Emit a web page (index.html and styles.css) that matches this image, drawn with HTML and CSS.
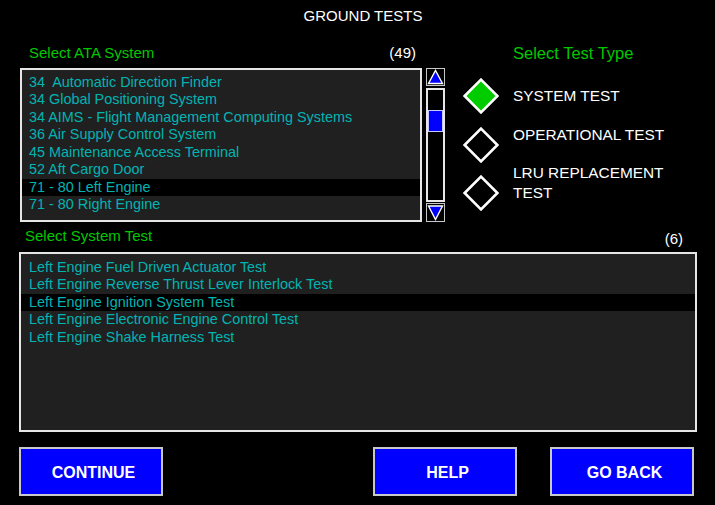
FILE: index.html
```html
<!DOCTYPE html>
<html>
<head>
<meta charset="utf-8">
<link rel="stylesheet" href="styles.css">
</head>
<body>
<div class="screen">
  <h1 class="title">GROUND TESTS</h1>
  <div class="top">
    <section class="ata">
      <div class="label-row ata-label"><span class="label">Select ATA System</span><span class="count">(49)</span></div>
      <div class="list-wrap">
        <ul class="list ata-list">
          <li>34&nbsp; Automatic Direction Finder</li>
          <li>34 Global Positioning System</li>
          <li>34 AIMS - Flight Management Computing Systems</li>
          <li>36 Air Supply Control System</li>
          <li>45 Maintenance Access Terminal</li>
          <li>52 Aft Cargo Door</li>
          <li class="sel">71 - 80 Left Engine</li>
          <li>71 - 80 Right Engine</li>
        </ul>
        <div class="scrollbar">
          <div class="scroll-btn"><svg width="19" height="18" viewBox="0 0 19 18"><rect x="0.5" y="0.5" width="18" height="17" fill="#000" stroke="#c8c8c8"/><polygon points="9.5,2.5 16.5,15.5 2.5,15.5" fill="#0000ff" stroke="#fff" stroke-width="1.4"/></svg></div>
          <div class="track"><div class="thumb"></div></div>
          <div class="scroll-btn down"><svg width="19" height="19" viewBox="0 0 19 19"><rect x="0.5" y="0.5" width="18" height="18" fill="#000" stroke="#c8c8c8"/><polygon points="2.5,3 16.5,3 9.5,16.5" fill="#0000ff" stroke="#fff" stroke-width="1.4"/></svg></div>
        </div>
      </div>
    </section>
    <section class="type">
      <div class="type-label">Select Test Type</div>
      <div class="type-body">
        <div class="diamonds">
          <svg class="diamond" width="36" height="36" viewBox="0 0 36 36"><polygon points="18,1.6 34.4,18 18,34.4 1.6,18" fill="#00cc00" stroke="#fff" stroke-width="2.6"/></svg>
          <svg class="diamond" width="36" height="36" viewBox="0 0 36 36"><polygon points="18,1.6 34.4,18 18,34.4 1.6,18" fill="#000" stroke="#fff" stroke-width="2.6"/></svg>
          <svg class="diamond" width="36" height="36" viewBox="0 0 36 36"><polygon points="18,1.6 34.4,18 18,34.4 1.6,18" fill="#000" stroke="#fff" stroke-width="2.6"/></svg>
        </div>
        <div class="type-labels">
          <div>SYSTEM TEST</div>
          <div>OPERATIONAL TEST</div>
          <div>LRU REPLACEMENT<br>TEST</div>
        </div>
      </div>
    </section>
  </div>
  <section class="sys">
    <div class="label-row sys-label"><span class="label">Select System Test</span><span class="count count-low">(6)</span></div>
    <ul class="list sys-list">
      <li>Left Engine Fuel Driven Actuator Test</li>
      <li>Left Engine Reverse Thrust Lever Interlock Test</li>
      <li class="sel">Left Engine Ignition System Test</li>
      <li>Left Engine Electronic Engine Control Test</li>
      <li>Left Engine Shake Harness Test</li>
    </ul>
  </section>
  <div class="actions">
    <button class="btn">CONTINUE</button>
    <button class="btn help">HELP</button>
    <button class="btn">GO BACK</button>
  </div>
</div>
</body>
</html>
```
FILE: styles.css
```css
* { box-sizing: border-box; }
body {
  margin: 0;
  background: #000;
  font-family: "Liberation Sans", Arial, sans-serif;
}
.screen {
  width: 715px;
  height: 505px;
  overflow: hidden;
}
.title {
  margin: 0;
  height: 32px;
  line-height: 32px;
  padding-left: 11px;
  text-align: center;
  font-size: 15px;
  font-weight: normal;
  color: #fff;
}
.top {
  display: flex;
  padding-left: 20px;
  margin-top: 12px;
}
.ata { width: 425px; }
.label-row {
  display: flex;
  justify-content: space-between;
  align-items: center;
  height: 18px;
  line-height: 18px;
}
.ata-label {
  padding: 0 29px 0 9px;
  margin-bottom: 6px;
}
.label { color: #00c800; font-size: 15px; }
.count { color: #fff; font-size: 15px; }
.count-low { margin-top: 6px; }
.list-wrap { display: flex; gap: 4px; }
.list {
  list-style: none;
  margin: 0;
  background: #202020;
  border: 2px solid #e6e6e6;
}
.list li {
  height: 17.5px;
  line-height: 17px;
  color: #00b4b4;
  font-size: 14.4px;
  white-space: nowrap;
}
.list li.sel { background: #000; }
.ata-list {
  width: 402px;
  height: 154px;
  padding: 3.5px 0 0;
}
.ata-list li { padding-left: 7px; }
.scrollbar {
  width: 19px;
  display: flex;
  flex-direction: column;
}
.scroll-btn svg { display: block; }
.track {
  margin-top: 2px;
  height: 114px;
  border: 2px solid #e6e6e6;
  background: #000;
}
.thumb {
  margin-top: 20px;
  height: 22px;
  background: #0000ff;
  border: 1px solid #c8c8ff;
}
.scroll-btn.down { margin-top: 1px; }
.type { margin-left: 18px; }
.type-label {
  padding-left: 50px;
  height: 18px;
  line-height: 18px;
  font-size: 16.5px;
  color: #00c800;
}
.type-body {
  display: flex;
  margin-top: 16px;
}
.diamonds {
  display: flex;
  flex-direction: column;
  gap: 12.5px;
  width: 36px;
}
.diamond { display: block; }
.type-labels {
  margin-left: 14px;
  padding-top: 8px;
  display: flex;
  flex-direction: column;
  gap: 19px;
  color: #fff;
  font-size: 15.4px;
  line-height: 19.5px;
}
.sys {
  padding: 0 18px 0 19px;
  margin-top: 5px;
}
.sys-label {
  padding: 0 14px 0 6px;
  margin-bottom: 7px;
}
.sys-list {
  width: 678px;
  height: 180px;
  padding: 4.5px 0 0;
}
.sys-list li { padding-left: 8px; }
.actions {
  display: flex;
  gap: 33px;
  padding: 0 21px 0 19px;
  margin-top: 15px;
}
.btn {
  width: 144px;
  height: 49px;
  margin: 0;
  padding: 2px 0 0 5px;
  background: #0000ff;
  border: 2px solid #c8c8c8;
  color: #fff;
  font-family: "Liberation Sans", Arial, sans-serif;
  font-weight: bold;
  font-size: 16px;
}
.btn.help { margin-left: auto; }
```
